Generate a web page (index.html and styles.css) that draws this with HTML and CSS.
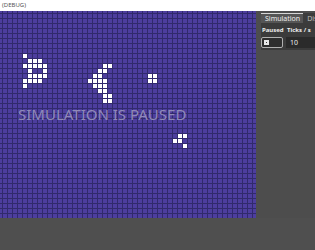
FILE: index.html
```html
<!DOCTYPE html>
<html lang="en">

<head>
    <meta charset="UTF-8">
    <meta name="viewport" content="width=device-width, initial-scale=1.0">
    <title>Game of Life (DEBUG)</title>
    <link rel="stylesheet" href="styles.css">
</head>

<body>
    <div class="titlebar">(DEBUG)</div>

    <div class="main">
        <div class="world" id="world">
            <div class="paused">SIMULATION IS PAUSED</div>
        </div>

        <div class="side">
            <div class="tabs">
                <span class="tab active">Simulation</span>
                <span class="tab">Dis</span>
            </div>
            <div class="panel">
                <span class="label">Paused</span>
                <span class="label">Ticks / s</span>
                <span class="check"><span class="box"></span></span>
                <span class="spin">10</span>
            </div>
        </div>
    </div>

    <div class="bottom"></div>

    <script>
        // live cells as [column, row]
        let cells = [
            [4, 8],
            [5, 9], [6, 9], [7, 9],
            [4, 10], [5, 10], [6, 10], [7, 10], [8, 10],
            [5, 11], [8, 11],
            [5, 12], [6, 12], [7, 12], [8, 12],
            [4, 13], [5, 13], [6, 13], [7, 13],
            [4, 14],

            [20, 10], [21, 10],
            [19, 11], [20, 11],
            [18, 12], [19, 12],
            [17, 13], [18, 13], [19, 13], [20, 13],
            [18, 14], [19, 14], [20, 14],
            [19, 15], [20, 15],
            [20, 16], [21, 16],
            [20, 17], [21, 17],

            [29, 12], [30, 12],
            [29, 13], [30, 13],

            [35, 24], [36, 24],
            [34, 25], [35, 25],
            [36, 26]
        ]

        let world = document.getElementById("world")
        for (let i = 0; i < cells.length; i++) {
            let cell = document.createElement("div")
            cell.className = "cell"
            cell.style.gridColumn = cells[i][0] + 1
            cell.style.gridRow = cells[i][1] + 1
            world.appendChild(cell)
        }
    </script>
</body>

</html>
```

FILE: styles.css
```css
* {
    margin: 0;
    padding: 0;
    box-sizing: border-box;
}

body {
    width: 315px;
    height: 250px;
    overflow: hidden;
    background: #4d4d4d;
    font-family: "Noto Sans", "DejaVu Sans", sans-serif;
}

.titlebar {
    height: 11px;
    padding-left: 2px;
    font-size: 6px;
    line-height: 11px;
    color: #555;
    background: #fff;
}

.main {
    display: flex;
    height: 207px;
}

.world {
    position: relative;
    width: 256px;
    height: 207px;
    padding: 2px 0 0 2px;
    display: grid;
    grid-template-columns: repeat(51, 5px);
    grid-auto-rows: 5px;
    align-content: start;
    background-color: #4d3e9e;
    background-image:
        linear-gradient(to right, #312a6c 1px, transparent 1px),
        linear-gradient(to bottom, #312a6c 1px, transparent 1px);
    background-size: 5px 5px;
    background-position: 2px 2px;
    overflow: hidden;
}

.cell {
    width: 4px;
    height: 4px;
    margin: 1px 0 0 1px;
    background: #fff;
}

.paused {
    position: absolute;
    left: 18px;
    top: 93px;
    font-size: 15px;
    color: #9089b8;
    white-space: nowrap;
}

.side {
    flex: 1;
    padding: 2px 0 0 5px;
    overflow: hidden;
}

.tabs {
    display: flex;
    height: 10px;
    white-space: nowrap;
}

.tab {
    padding: 0 3px 0 4px;
    font-size: 7px;
    line-height: 9px;
    color: #bdbdbd;
    background: #3c3c3c;
    border-top: 1px solid #3c3c3c;
}

.tab.active {
    color: #eee;
    background: #555;
    border-top-color: #d6d6d6;
}

.panel {
    display: grid;
    grid-template-columns: 22px 30px;
    grid-template-rows: 11px 11px;
    column-gap: 3px;
    row-gap: 1px;
    height: 27px;
    padding-top: 2px;
    background: #3b3b3b;
}

.label {
    padding-left: 1px;
    font-size: 6px;
    font-weight: bold;
    line-height: 11px;
    color: #eee;
    white-space: nowrap;
}

.check {
    display: flex;
    align-items: center;
    padding-left: 2px;
    border: 1px solid #b0b0b0;
    border-radius: 2px;
    background: #2e2e2e;
}

.box {
    width: 5px;
    height: 5px;
    border: 1px solid #e8e8e8;
    background: #3a3a3a;
    box-shadow: inset 0 0 0 1px #e8e8e8;
}

.spin {
    padding-left: 4px;
    font-size: 7px;
    line-height: 11px;
    color: #eee;
    background: #2b2b2b;
}

.bottom {
    height: 32px;
    background: #4f4f4f;
}
```
